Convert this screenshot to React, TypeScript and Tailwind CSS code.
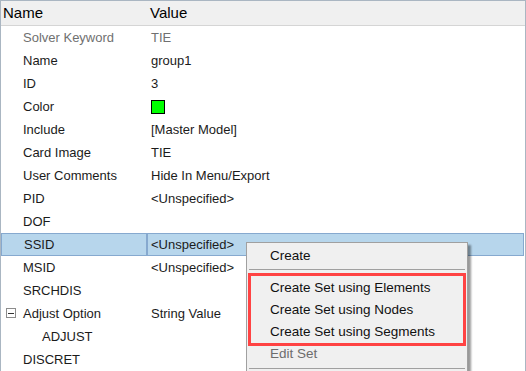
const rows: { name: string; value?: string; muted?: boolean; indent?: boolean; swatch?: boolean; expander?: boolean; selected?: boolean }[] = [
  { name: 'Solver Keyword', value: 'TIE', muted: true },
  { name: 'Name', value: 'group1' },
  { name: 'ID', value: '3' },
  { name: 'Color', swatch: true },
  { name: 'Include', value: '[Master Model]' },
  { name: 'Card Image', value: 'TIE' },
  { name: 'User Comments', value: 'Hide In Menu/Export' },
  { name: 'PID', value: '<Unspecified>' },
  { name: 'DOF' },
  { name: 'SSID', value: '<Unspecified>', selected: true },
  { name: 'MSID', value: '<Unspecified>' },
  { name: 'SRCHDIS' },
  { name: 'Adjust Option', value: 'String Value', expander: true },
  { name: 'ADJUST', indent: true },
  { name: 'DISCRET' },
];

const App = () => {
  return (
    <div
      className="relative w-[526px] h-[371px] overflow-hidden bg-white border-l border-t border-r border-[#aab6c2] text-[13px] text-[#1b1b1b]"
      style={{ fontFamily: '"Liberation Sans", Arial, sans-serif' }}
    >
      <div className="grid grid-cols-[147px_1fr] h-[25px] bg-[#f0f0f0] border-b border-[#d5d5d5] text-[15px] text-black">
        <div className="flex items-center pl-[2px]">Name</div>
        <div className="flex items-center pl-[2px]">Value</div>
      </div>

      {rows.map((row, i) => (
        <div
          key={i}
          className={`grid grid-cols-[147px_1fr] h-[23px] mr-[1px] ${row.selected ? 'bg-[#b7d6ec]' : ''}`}
        >
          <div
            className={`flex items-center ${row.indent ? 'pl-[41px]' : 'pl-[22px]'} relative ${
              row.selected ? 'border border-r-2 border-[#86a9cf]' : ''
            } ${row.muted ? 'text-[#707070]' : ''}`}
          >
            {row.expander && (
              <span className="absolute left-[5px] top-[6px] w-[10px] h-[10px] border border-[#8c8c8c] bg-white flex items-center justify-center">
                <span className="w-[6px] h-[1px] bg-[#333]" />
              </span>
            )}
            {row.name}
          </div>
          <div
            className={`flex items-center pl-[3px] ${row.selected ? 'border border-l-0 border-[#86a9cf]' : ''} ${
              row.muted ? 'text-[#707070]' : ''
            }`}
          >
            {row.swatch ? (
              <span className="w-[14px] h-[14px] border border-black bg-[#00ff00]" />
            ) : (
              row.value
            )}
          </div>
        </div>
      ))}

      <div
        className="absolute left-[245px] top-[241px] w-[222px] h-[140px] bg-[#f0f0f0] border border-[#a0a0a0] shadow-[3px_3px_2px_rgba(0,0,0,0.4)] text-[13.5px] text-[#111]"
        style={{ fontFamily: '"Liberation Sans", Arial, sans-serif' }}
      >
        <div className="pt-[2px] flex flex-col">
          <div className="h-[22px] flex items-center pl-[23px]">Create</div>
          <div className="h-[10px] flex items-start pt-[2px] px-[2px]">
            <div className="w-full h-[1px] bg-[#a0a0a0]" />
          </div>
          <div className="relative flex flex-col">
            <div className="h-[22px] flex items-center pl-[23px]">Create Set using Elements</div>
            <div className="h-[22px] flex items-center pl-[23px]">Create Set using Nodes</div>
            <div className="h-[22px] flex items-center pl-[23px]">Create Set using Segments</div>
            <div className="absolute left-[1px] right-[1px] top-[-4px] h-[73px] border-[3px] border-[#ff4343]" />
          </div>
          <div className="h-[22px] flex items-center pl-[23px] text-[#6d6d6d]">Edit Set</div>
          <div className="h-[6px] flex items-start pt-[3px] px-[2px]">
            <div className="w-full h-[1px] bg-[#a0a0a0]" />
          </div>
        </div>
      </div>
    </div>
  );
};

export default App;
